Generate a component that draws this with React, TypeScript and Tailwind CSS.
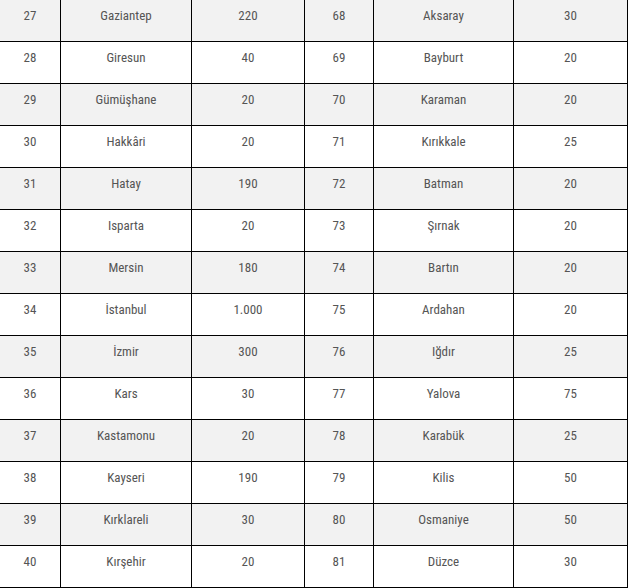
const rows: [string, string, string, string, string, string][] = [
  ["27", "Gaziantep", "220", "68", "Aksaray", "30"],
  ["28", "Giresun", "40", "69", "Bayburt", "20"],
  ["29", "Gümüşhane", "20", "70", "Karaman", "20"],
  ["30", "Hakkâri", "20", "71", "Kırıkkale", "25"],
  ["31", "Hatay", "190", "72", "Batman", "20"],
  ["32", "Isparta", "20", "73", "Şırnak", "20"],
  ["33", "Mersin", "180", "74", "Bartın", "20"],
  ["34", "İstanbul", "1.000", "75", "Ardahan", "20"],
  ["35", "İzmir", "300", "76", "Iğdır", "25"],
  ["36", "Kars", "30", "77", "Yalova", "75"],
  ["37", "Kastamonu", "20", "78", "Karabük", "25"],
  ["38", "Kayseri", "190", "79", "Kilis", "50"],
  ["39", "Kırklareli", "30", "80", "Osmaniye", "50"],
  ["40", "Kırşehir", "20", "81", "Düzce", "30"],
];

const widths = ["w-[61px]", "w-[131px]", "w-[113px]", "w-[69px]", "w-[140px]", "w-[114px]"];

export default function App() {
  return (
    <div className="w-[630px] h-[588px] bg-white overflow-hidden font-['Roboto_Condensed','Liberation_Sans_Narrow','Arial_Narrow',sans-serif] text-[13px] text-[#555]">
      <div className="flex flex-col w-[628px]">
        {rows.map((r, i) => (
          <div
            key={r[0]}
            className={`flex h-[42px] border-b border-black ${i % 2 === 0 ? "bg-[#f2f2f2]" : "bg-white"}`}
          >
            {r.map((c, j) => (
              <div
                key={j}
                className={`${widths[j]} shrink-0 border-r border-black flex justify-center pt-[6px] leading-[20px]`}
              >
                {c}
              </div>
            ))}
          </div>
        ))}
      </div>
    </div>
  );
}
